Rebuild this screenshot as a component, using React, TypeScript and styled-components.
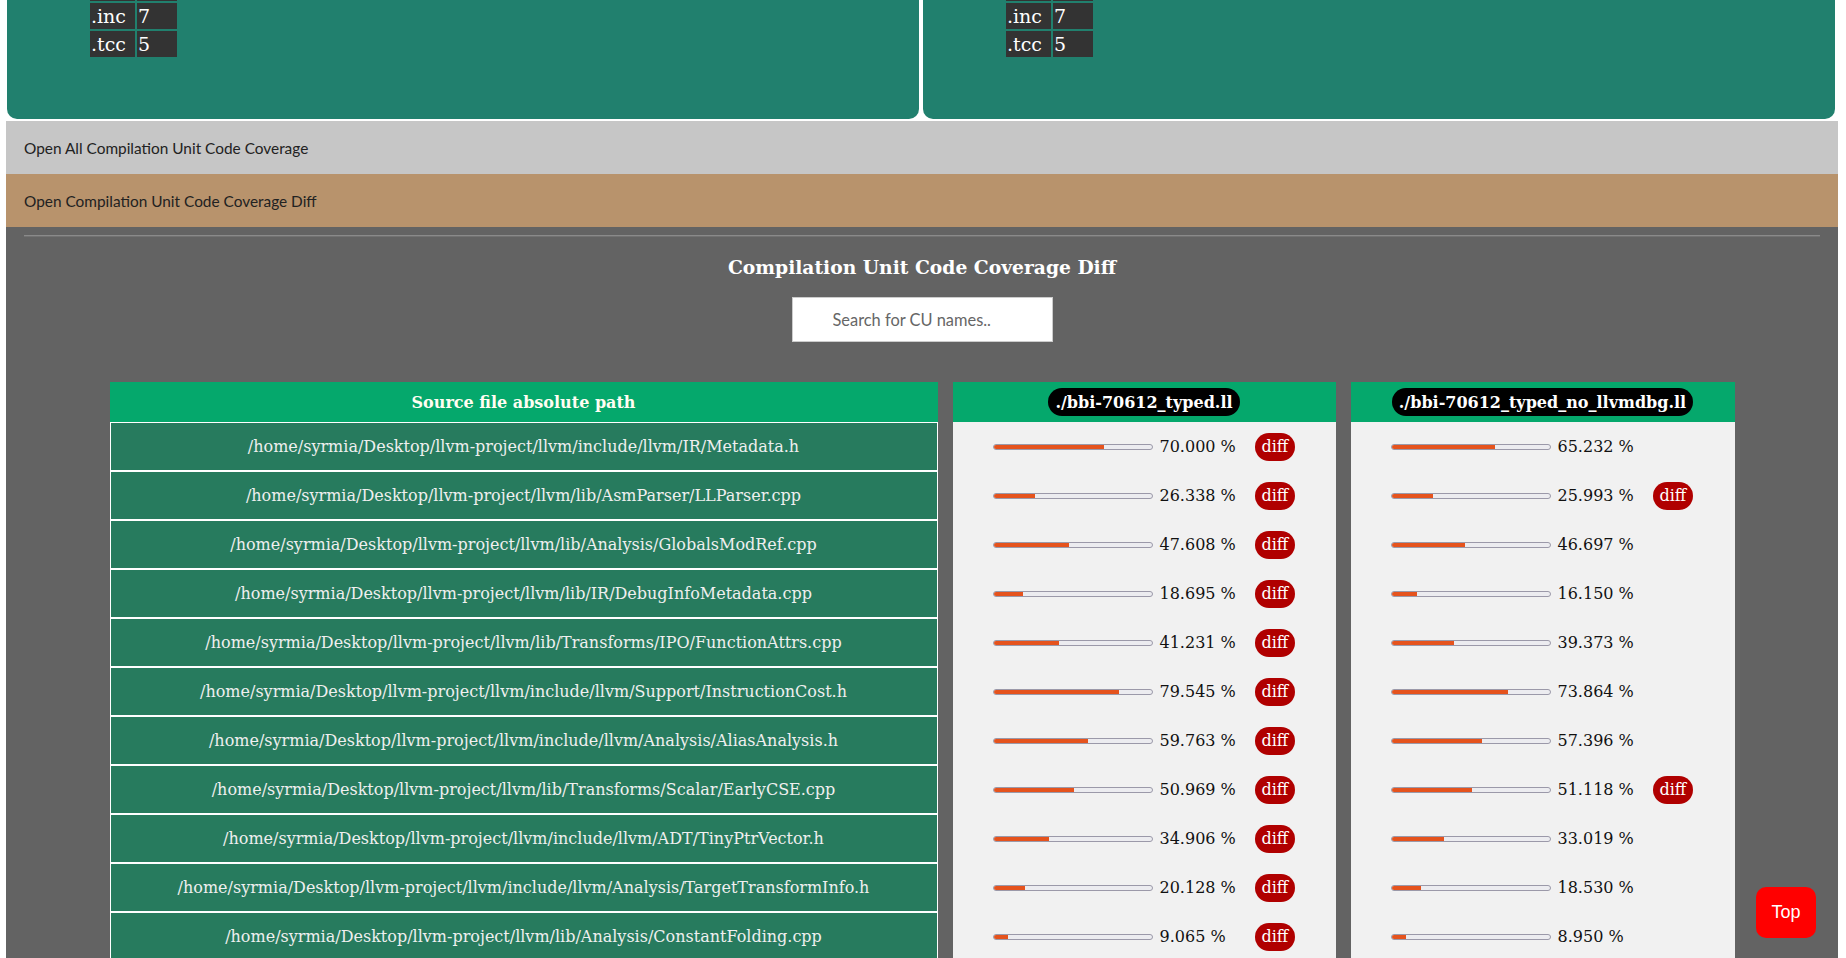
import React from "react";
import styled, { createGlobalStyle } from "styled-components";

const GlobalStyle = createGlobalStyle`
  html, body { margin: 0; padding: 0; background: #ffffff; }
  body { font-family: "DejaVu Serif", serif; }
  #root { padding: 0 8px 0 6px; }
`;

/* ---------- top summary panels (page is scrolled, so they start above the fold) ---------- */
const TopRow = styled.div`
  display: flex;
  gap: 4px;
  padding: 0 3px 0 1px;
  margin-top: -47px;
`;

const Panel = styled.div`
  flex: 1;
  background: #21806e;
  border-radius: 10px;
  padding: 20px 0 60px 81px;
`;

const ExtTable = styled.table`
  border-spacing: 2px;
  font-family: "DejaVu Serif", serif;
  font-size: 19px;
  color: #ffffff;
`;

const ExtCell = styled.td<{ $w: number }>`
  box-sizing: border-box;
  width: ${(p) => p.$w}px;
  height: 26px;
  padding: 0 1px;
  line-height: 26px;
  background: #333333;
  vertical-align: middle;
`;

/* ---------- collapsible bands ---------- */
const Band = styled.div<{ $bg: string }>`
  display: flex;
  align-items: center;
  height: 53px;
  padding-left: 18px;
  background: ${(p) => p.$bg};
  font-family: Lato, "Open Sans", sans-serif;
  font-size: 15.4px;
  color: #222222;
`;

const FirstBand = styled(Band)`
  margin-top: 2px;
`;

/* ---------- diff section ---------- */
const Section = styled.section`
  background: #636363;
  padding: 8px 18px 40px;
`;

const Rule = styled.hr`
  margin: 0;
  height: 0;
  border: none;
  border-top: 1px solid #8a8a8a;
  border-bottom: 1px solid #727272;
`;

const Title = styled.h3`
  margin: 19px 0;
  line-height: 22px;
  font-size: 18.72px;
  font-weight: bold;
  text-align: center;
  color: #ffffff;
`;

const Search = styled.input`
  display: block;
  margin: 0 auto;
  width: 261px;
  height: 45px;
  box-sizing: border-box;
  border: 1px solid #cccccc;
  padding: 0 0 0 40px;
  font-family: Lato, "Open Sans", sans-serif;
  font-size: 16.4px;
  color: #333;
  outline: none;
  &::placeholder { color: #666666; }
`;

const Tables = styled.div`
  display: flex;
  justify-content: center;
  align-items: flex-start;
  gap: 15px;
  margin-top: 40px;
`;

const Column = styled.div<{ $w: number; $bg: string }>`
  width: ${(p) => p.$w}px;
  background: ${(p) => p.$bg};
`;

const HeadCell = styled.div`
  display: flex;
  align-items: center;
  justify-content: center;
  height: 40px;
  background: #05a86c;
  font-weight: bold;
  font-size: 16px;
  color: #fffdf2;
`;

const Pill = styled.span`
  display: inline-flex;
  align-items: center;
  height: 28px;
  padding: 0 7px;
  border-radius: 14px;
  background: #000000;
  color: #ffffff;
`;

const PathRow = styled.div`
  display: flex;
  align-items: center;
  justify-content: center;
  box-sizing: border-box;
  height: 49px;
  border: 1px solid #ffffff;
  background: #277b5e;
  font-size: 16px;
  color: #efefef;
`;

const CovRow = styled.div`
  display: flex;
  align-items: center;
  height: 49px;
  padding-left: 40px;
  font-size: 16px;
  color: #111111;
`;

const Track = styled.div`
  position: relative;
  box-sizing: border-box;
  width: 160px;
  height: 6px;
  border: 1px solid #9b99a9;
  border-radius: 3px;
  background: #ececf0;
  overflow: hidden;
`;

const Fill = styled.div`
  position: absolute;
  left: -1px;
  top: -1px;
  bottom: -1px;
  background: #e5531d;
  border-radius: 3px 0 0 3px;
`;

const Pct = styled.span`
  display: inline-block;
  width: 76px;
  margin-left: 7px;
  white-space: pre;
`;

const DiffBtn = styled.button`
  margin-left: 19px;
  height: 28px;
  padding: 0 7px;
  border: none;
  border-radius: 14px;
  background: #b00000;
  color: #ffffff;
  font-family: "DejaVu Serif", serif;
  font-size: 16px;
  cursor: pointer;
`;

const TopButton = styled.button`
  position: fixed;
  right: 30px;
  bottom: 20px;
  width: 60px;
  height: 51px;
  border: none;
  border-radius: 10px;
  background: #ff0000;
  color: #ffffff;
  font-family: "Liberation Sans", Arial, sans-serif;
  font-size: 18px;
  cursor: pointer;
`;

type Row = { path: string; a: number; aDiff: boolean; b: number; bDiff: boolean };

const P = "/home/syrmia/Desktop/llvm-project/llvm/";
const rows: Row[] = [
  { path: P + "include/llvm/IR/Metadata.h", a: 70.0, aDiff: true, b: 65.232, bDiff: false },
  { path: P + "lib/AsmParser/LLParser.cpp", a: 26.338, aDiff: true, b: 25.993, bDiff: true },
  { path: P + "lib/Analysis/GlobalsModRef.cpp", a: 47.608, aDiff: true, b: 46.697, bDiff: false },
  { path: P + "lib/IR/DebugInfoMetadata.cpp", a: 18.695, aDiff: true, b: 16.15, bDiff: false },
  { path: P + "lib/Transforms/IPO/FunctionAttrs.cpp", a: 41.231, aDiff: true, b: 39.373, bDiff: false },
  { path: P + "include/llvm/Support/InstructionCost.h", a: 79.545, aDiff: true, b: 73.864, bDiff: false },
  { path: P + "include/llvm/Analysis/AliasAnalysis.h", a: 59.763, aDiff: true, b: 57.396, bDiff: false },
  { path: P + "lib/Transforms/Scalar/EarlyCSE.cpp", a: 50.969, aDiff: true, b: 51.118, bDiff: true },
  { path: P + "include/llvm/ADT/TinyPtrVector.h", a: 34.906, aDiff: true, b: 33.019, bDiff: false },
  { path: P + "include/llvm/Analysis/TargetTransformInfo.h", a: 20.128, aDiff: true, b: 18.53, bDiff: false },
  { path: P + "lib/Analysis/ConstantFolding.cpp", a: 9.065, aDiff: true, b: 8.95, bDiff: false },
];

/* the first row lies above the scrolled viewport; only its bottom edge shows */
const extRows: [string, string][] = [
  ["", ""],
  [".inc", "7"],
  [".tcc", "5"],
];

function ExtPanel() {
  return (
    <Panel>
      <ExtTable>
        <tbody>
          {extRows.map(([k, v], i) => (
            <tr key={i}>
              <ExtCell $w={45}>{k}</ExtCell>
              <ExtCell $w={40}>{v}</ExtCell>
            </tr>
          ))}
        </tbody>
      </ExtTable>
    </Panel>
  );
}

function Coverage({ value, diff }: { value: number; diff: boolean }) {
  return (
    <CovRow>
      <Track>
        <Fill style={{ width: `calc(${value}% + 1px)` }} />
      </Track>
      <Pct>{value.toFixed(3)} %</Pct>
      {diff && <DiffBtn>diff</DiffBtn>}
    </CovRow>
  );
}

export default function App() {
  return (
    <>
      <GlobalStyle />
      <TopRow>
        <ExtPanel />
        <ExtPanel />
      </TopRow>
      <FirstBand $bg="#c6c6c6">Open All Compilation Unit Code Coverage</FirstBand>
      <Band $bg="#b8936c">Open Compilation Unit Code Coverage Diff</Band>
      <Section>
        <Rule />
        <Title>Compilation Unit Code Coverage Diff</Title>
        <Search placeholder="Search for CU names.." />
        <Tables>
          <Column $w={828} $bg="#277b5e">
            <HeadCell>Source file absolute path</HeadCell>
            {rows.map((r) => (
              <PathRow key={r.path}>{r.path}</PathRow>
            ))}
          </Column>
          <Column $w={383} $bg="#f1f1f1">
            <HeadCell>
              <Pill>./bbi-70612_typed.ll</Pill>
            </HeadCell>
            {rows.map((r) => (
              <Coverage key={r.path} value={r.a} diff={r.aDiff} />
            ))}
          </Column>
          <Column $w={384} $bg="#f1f1f1">
            <HeadCell>
              <Pill>./bbi-70612_typed_no_llvmdbg.ll</Pill>
            </HeadCell>
            {rows.map((r) => (
              <Coverage key={r.path} value={r.b} diff={r.bDiff} />
            ))}
          </Column>
        </Tables>
      </Section>
      <TopButton>Top</TopButton>
    </>
  );
}
